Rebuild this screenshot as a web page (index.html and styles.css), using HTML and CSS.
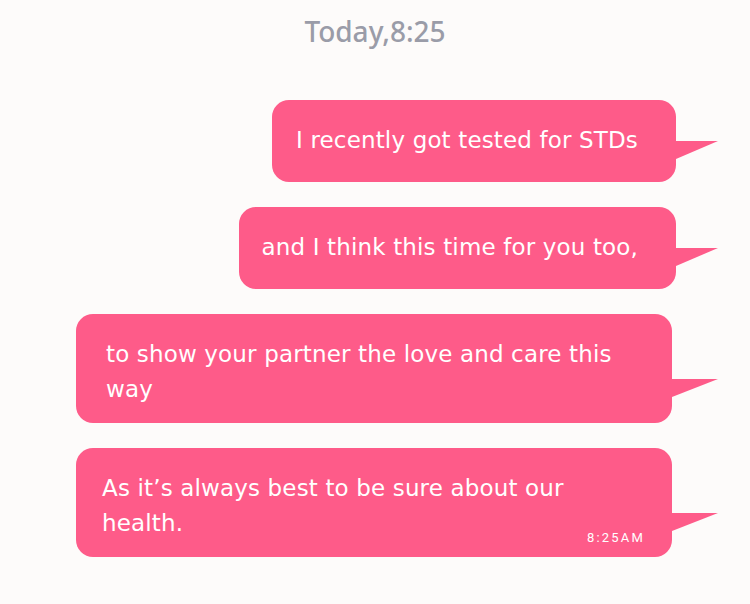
FILE: index.html
```html
<!DOCTYPE html>
<html lang="en">
<head>
  <meta charset="UTF-8">
  <meta name="viewport" content="width=device-width, initial-scale=1.0">
  <title>Chat</title>
  <link rel="stylesheet" href="styles.css">
</head>
<body>
  <main class="chat">
    <div class="day">Today,8:25</div>
    <div class="thread">
      <div class="msg msg-short msg-first">
        <p>I recently got tested for STDs</p>
      </div>
      <div class="msg msg-short msg-second">
        <p>and I think this time for you too,</p>
      </div>
      <div class="msg msg-wide msg-third">
        <p>to show your partner the love and care this way</p>
      </div>
      <div class="msg msg-wide msg-fourth">
        <p>As it’s always best to be sure about our health.</p>
        <span class="time">8:25AM</span>
      </div>
    </div>
  </main>
</body>
</html>
```

FILE: styles.css
```css
:root {
  --bg: #fdfbfa;
  --bubble: #fe5b89;
  --muted: #9a9ca8;
  --white: #ffffff;
}
* { box-sizing: border-box; }
body {
  margin: 0;
  background: var(--bg);
  font-family: 'DejaVu Sans', 'Open Sans', sans-serif;
}
.chat {
  padding-top: 14px;
}
.day {
  text-align: center;
  font-family: 'Noto Sans', sans-serif;
  font-size: 28px;
  font-weight: 500;
  color: var(--muted);
  line-height: 34px;
}
.thread {
  margin-top: 52px;
  display: flex;
  flex-direction: column;
  align-items: flex-end;
  gap: 25px;
  padding-right: 74px;
}
.msg {
  position: relative;
  background: var(--bubble);
  color: var(--white);
  border-radius: 17px;
}
.msg p {
  margin: 0;
  font-size: 23px;
  line-height: 35px;
  letter-spacing: 0.15px;
}
.msg::after {
  content: '';
  position: absolute;
  left: 100%;
  height: 18px;
  background: var(--bubble);
  clip-path: polygon(0 0, 100% 0, 0 100%);
}
.msg-short {
  padding: 23px 38px 24px 24px;
}
.msg-short::after {
  width: 42px;
  bottom: 23px;
}
.msg-second {
  padding-left: 22px;
}
.msg-wide {
  width: 596px;
  margin-right: 4px;
  padding: 23px 40px 16px 30px;
}
.msg-wide::after {
  width: 46px;
  bottom: 26px;
}
.msg-fourth {
  padding-left: 26px;
}
.time {
  position: absolute;
  right: 27px;
  bottom: 11px;
  font-family: Roboto, sans-serif;
  font-size: 13px;
  letter-spacing: 2.2px;
  line-height: 16px;
}
```
